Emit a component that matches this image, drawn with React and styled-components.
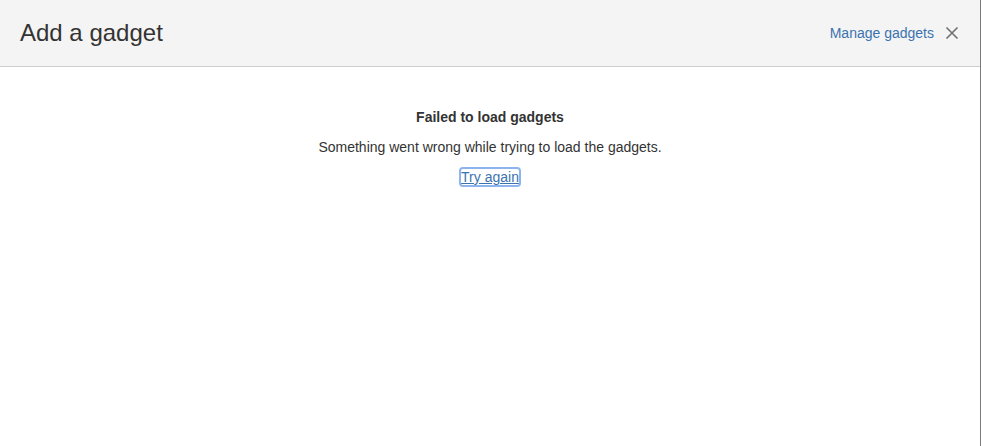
import React from 'react'
import styled, { createGlobalStyle } from 'styled-components'

const GlobalStyle = createGlobalStyle`
  html, body {
    margin: 0;
    padding: 0;
    background: #7a7a7a;
    font-family: Arial, "Liberation Sans", sans-serif;
  }
`

const Dialog = styled.div`
  width: 980px;
  height: 446px;
  background: #fff;
  display: flex;
  flex-direction: column;
`

const Header = styled.div`
  height: 66px;
  background: #f4f4f4;
  border-bottom: 1px solid #cccccc;
  display: flex;
  align-items: center;
  justify-content: space-between;
  padding: 0 20px;
  box-sizing: content-box;
`

const Title = styled.h2`
  margin: 0;
  font-size: 24px;
  font-weight: normal;
  color: #333;
  line-height: 30px;
`

const Actions = styled.div`
  display: flex;
  align-items: center;
  gap: 10px;
`

const Link = styled.a`
  color: #3b73af;
  font-size: 14px;
  text-decoration: ${p => (p.underline ? 'underline' : 'none')};
  cursor: pointer;
  line-height: 16px;
  ${p => p.focused && `
    outline: 2px solid #8db4ee;
    outline-offset: 0;
    border-radius: 2px;
  `}
`

const CloseButton = styled.button`
  border: none;
  background: none;
  padding: 0;
  width: 16px;
  height: 16px;
  display: flex;
  align-items: center;
  justify-content: center;
  cursor: pointer;
`

const Body = styled.div`
  flex: 1;
  padding-top: 40px;
  display: flex;
  flex-direction: column;
  align-items: center;
  color: #333;
  font-size: 14px;
`

const Line = styled.p`
  margin: 0 0 10px;
  line-height: 20px;
  font-weight: ${p => (p.bold ? 'bold' : 'normal')};
`

export default function App() {
  return (
    <>
      <GlobalStyle />
      <Dialog>
        <Header>
          <Title>Add a gadget</Title>
          <Actions>
            <Link>Manage gadgets</Link>
            <CloseButton aria-label="Close">
              <svg width="14" height="14" viewBox="0 0 14 14">
                <path d="M1.5 1.5 L12.5 12.5 M12.5 1.5 L1.5 12.5" stroke="#707070" strokeWidth="1.6" fill="none" />
              </svg>
            </CloseButton>
          </Actions>
        </Header>
        <Body>
          <Line bold>Failed to load gadgets</Line>
          <Line>Something went wrong while trying to load the gadgets.</Line>
          <Line>
            <Link underline focused>Try again</Link>
          </Line>
        </Body>
      </Dialog>
    </>
  )
}
